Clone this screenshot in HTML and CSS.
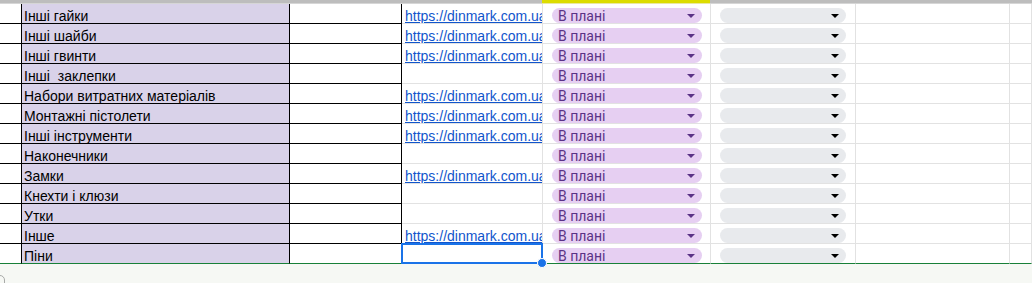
FILE: index.html
```html
<!DOCTYPE html>
<html>
<head>
<meta charset="utf-8">
<link rel="stylesheet" href="styles.css">
</head>
<body>
<div class="page">
  <div class="topbar"><div class="tb-gray tb-a"></div><div class="tb-yellow"></div><div class="tb-gray tb-b"></div></div>
  <div class="sheet">
    <div class="c a"></div><div class="c b">Інші гайки</div><div class="c cc"></div><div class="c d"><span class="link">https://dinmark.com.ua/</span></div><div class="c e"><span class="chip p">В плані<i class="arr"></i></span></div><div class="c f"><span class="chip g"><i class="arr"></i></span></div><div class="c gg"></div><div class="c h"></div>
    <div class="c a"></div><div class="c b">Інші шайби</div><div class="c cc"></div><div class="c d"><span class="link">https://dinmark.com.ua/</span></div><div class="c e"><span class="chip p">В плані<i class="arr"></i></span></div><div class="c f"><span class="chip g"><i class="arr"></i></span></div><div class="c gg"></div><div class="c h"></div>
    <div class="c a"></div><div class="c b">Інші гвинти</div><div class="c cc"></div><div class="c d"><span class="link">https://dinmark.com.ua/</span></div><div class="c e"><span class="chip p">В плані<i class="arr"></i></span></div><div class="c f"><span class="chip g"><i class="arr"></i></span></div><div class="c gg"></div><div class="c h"></div>
    <div class="c a"></div><div class="c b">Інші&nbsp; заклепки</div><div class="c cc"></div><div class="c d"></div><div class="c e"><span class="chip p">В плані<i class="arr"></i></span></div><div class="c f"><span class="chip g"><i class="arr"></i></span></div><div class="c gg"></div><div class="c h"></div>
    <div class="c a"></div><div class="c b">Набори витратних матеріалів</div><div class="c cc"></div><div class="c d"><span class="link">https://dinmark.com.ua/</span></div><div class="c e"><span class="chip p">В плані<i class="arr"></i></span></div><div class="c f"><span class="chip g"><i class="arr"></i></span></div><div class="c gg"></div><div class="c h"></div>
    <div class="c a"></div><div class="c b">Монтажні пістолети</div><div class="c cc"></div><div class="c d"><span class="link">https://dinmark.com.ua/</span></div><div class="c e"><span class="chip p">В плані<i class="arr"></i></span></div><div class="c f"><span class="chip g"><i class="arr"></i></span></div><div class="c gg"></div><div class="c h"></div>
    <div class="c a"></div><div class="c b">Інші інструменти</div><div class="c cc"></div><div class="c d"><span class="link">https://dinmark.com.ua/</span></div><div class="c e"><span class="chip p">В плані<i class="arr"></i></span></div><div class="c f"><span class="chip g"><i class="arr"></i></span></div><div class="c gg"></div><div class="c h"></div>
    <div class="c a"></div><div class="c b">Наконечники</div><div class="c cc"></div><div class="c d"></div><div class="c e"><span class="chip p">В плані<i class="arr"></i></span></div><div class="c f"><span class="chip g"><i class="arr"></i></span></div><div class="c gg"></div><div class="c h"></div>
    <div class="c a"></div><div class="c b">Замки</div><div class="c cc"></div><div class="c d"><span class="link">https://dinmark.com.ua/</span></div><div class="c e"><span class="chip p">В плані<i class="arr"></i></span></div><div class="c f"><span class="chip g"><i class="arr"></i></span></div><div class="c gg"></div><div class="c h"></div>
    <div class="c a"></div><div class="c b">Кнехти і клюзи</div><div class="c cc"></div><div class="c d"></div><div class="c e"><span class="chip p">В плані<i class="arr"></i></span></div><div class="c f"><span class="chip g"><i class="arr"></i></span></div><div class="c gg"></div><div class="c h"></div>
    <div class="c a"></div><div class="c b">Утки</div><div class="c cc"></div><div class="c d"></div><div class="c e"><span class="chip p">В плані<i class="arr"></i></span></div><div class="c f"><span class="chip g"><i class="arr"></i></span></div><div class="c gg"></div><div class="c h"></div>
    <div class="c a"></div><div class="c b">Інше</div><div class="c cc"></div><div class="c d"><span class="link">https://dinmark.com.ua/</span></div><div class="c e"><span class="chip p">В плані<i class="arr"></i></span></div><div class="c f"><span class="chip g"><i class="arr"></i></span></div><div class="c gg"></div><div class="c h"></div>
    <div class="c a last"></div><div class="c b last">Піни</div><div class="c cc last"></div><div class="c d last sel"><span class="handle"></span></div><div class="c e last"><span class="chip p">В плані<i class="arr"></i></span></div><div class="c f last"><span class="chip g"><i class="arr"></i></span></div><div class="c gg last"></div><div class="c h last"></div>
  </div>
  <div class="footer"><span class="ring"></span></div>
</div>
</body>
</html>
```

FILE: styles.css
```css
html, body {
  margin: 0;
  padding: 0;
  background: #ffffff;
  overflow: hidden;
}
.page {
  width: 1032px;
  height: 283px;
  display: flex;
  flex-direction: column;
  font-family: "Liberation Sans", Arial, sans-serif;
}
.topbar {
  display: flex;
  height: 4px;
  flex: none;
}
.tb-gray {
  background: linear-gradient(#bdbdbd, #bdbdbd 3px, #d6d6d6 3px);
}
.tb-a { width: 542px; }
.tb-yellow {
  width: 168px;
  background: linear-gradient(#dcdc00, #dcdc00 3px, #e9e9a0 3px);
}
.tb-b { flex: 1; }
.sheet {
  display: grid;
  grid-template-columns: 22px 268px 112px 141px 168px 145px 154px 1fr;
  grid-auto-rows: 20px;
  flex: none;
}
.c {
  box-sizing: border-box;
  height: 20px;
  border-right: 1px solid #e2e2e2;
  border-bottom: 1px solid #e2e2e2;
  position: relative;
  overflow: hidden;
  white-space: nowrap;
  font-size: 14px;
  line-height: 17px;
}
.a, .b, .cc {
  border-right-color: #000;
  border-bottom-color: #000;
}
.a { background: #fff; }
.b {
  background: #d9d2e9;
  color: #000;
  padding: 4px 0 0 2px;
}
.cc { background: #fff; }
.d {
  padding: 4px 0 0 3px;
  overflow: hidden;
}
.link {
  color: #1155cc;
  text-decoration: underline;
}
.e, .f {
  display: flex;
  align-items: flex-end;
}
.e { padding: 0 8px 0 9px; }
.f { padding: 0 9px 0 9px; }
.chip {
  position: relative;
  box-sizing: border-box;
  height: 15px;
  width: 100%;
  border-radius: 8px;
  font-family: Roboto, "Liberation Sans", sans-serif;
  font-size: 14px;
  line-height: 15px;
  padding-left: 6px;
  padding-top: 1px;
  margin-bottom: 0;
}
.chip.p {
  background: #e6cff2;
  color: #5a3286;
}
.chip.g {
  background: #e8eaed;
}
.arr {
  position: absolute;
  right: 7px;
  top: 6px;
  width: 0;
  height: 0;
  border-left: 4px solid transparent;
  border-right: 4px solid transparent;
  border-top: 4px solid #5a3286;
}
.chip.g .arr {
  border-top-color: #000;
  right: 7px;
}
.last {
  border-bottom: 1px solid #188038;
}
.sel {
  overflow: visible;
}
.sel::before {
  content: "";
  position: absolute;
  left: -1px;
  top: -1px;
  right: -1px;
  bottom: -1px;
  border: 2px solid #1a73e8;
}
.handle {
  position: absolute;
  right: -5px;
  bottom: -5px;
  width: 8px;
  height: 8px;
  border-radius: 50%;
  background: #1a73e8;
  border: 1px solid #fff;
  z-index: 2;
}
.footer {
  flex: 1;
  background: #f6f8f4;
  position: relative;
  overflow: hidden;
}
.ring {
  position: absolute;
  left: -9px;
  top: 11px;
  width: 12px;
  height: 14px;
  border: 1px solid #a8aaa8;
  border-radius: 5px;
}
```
